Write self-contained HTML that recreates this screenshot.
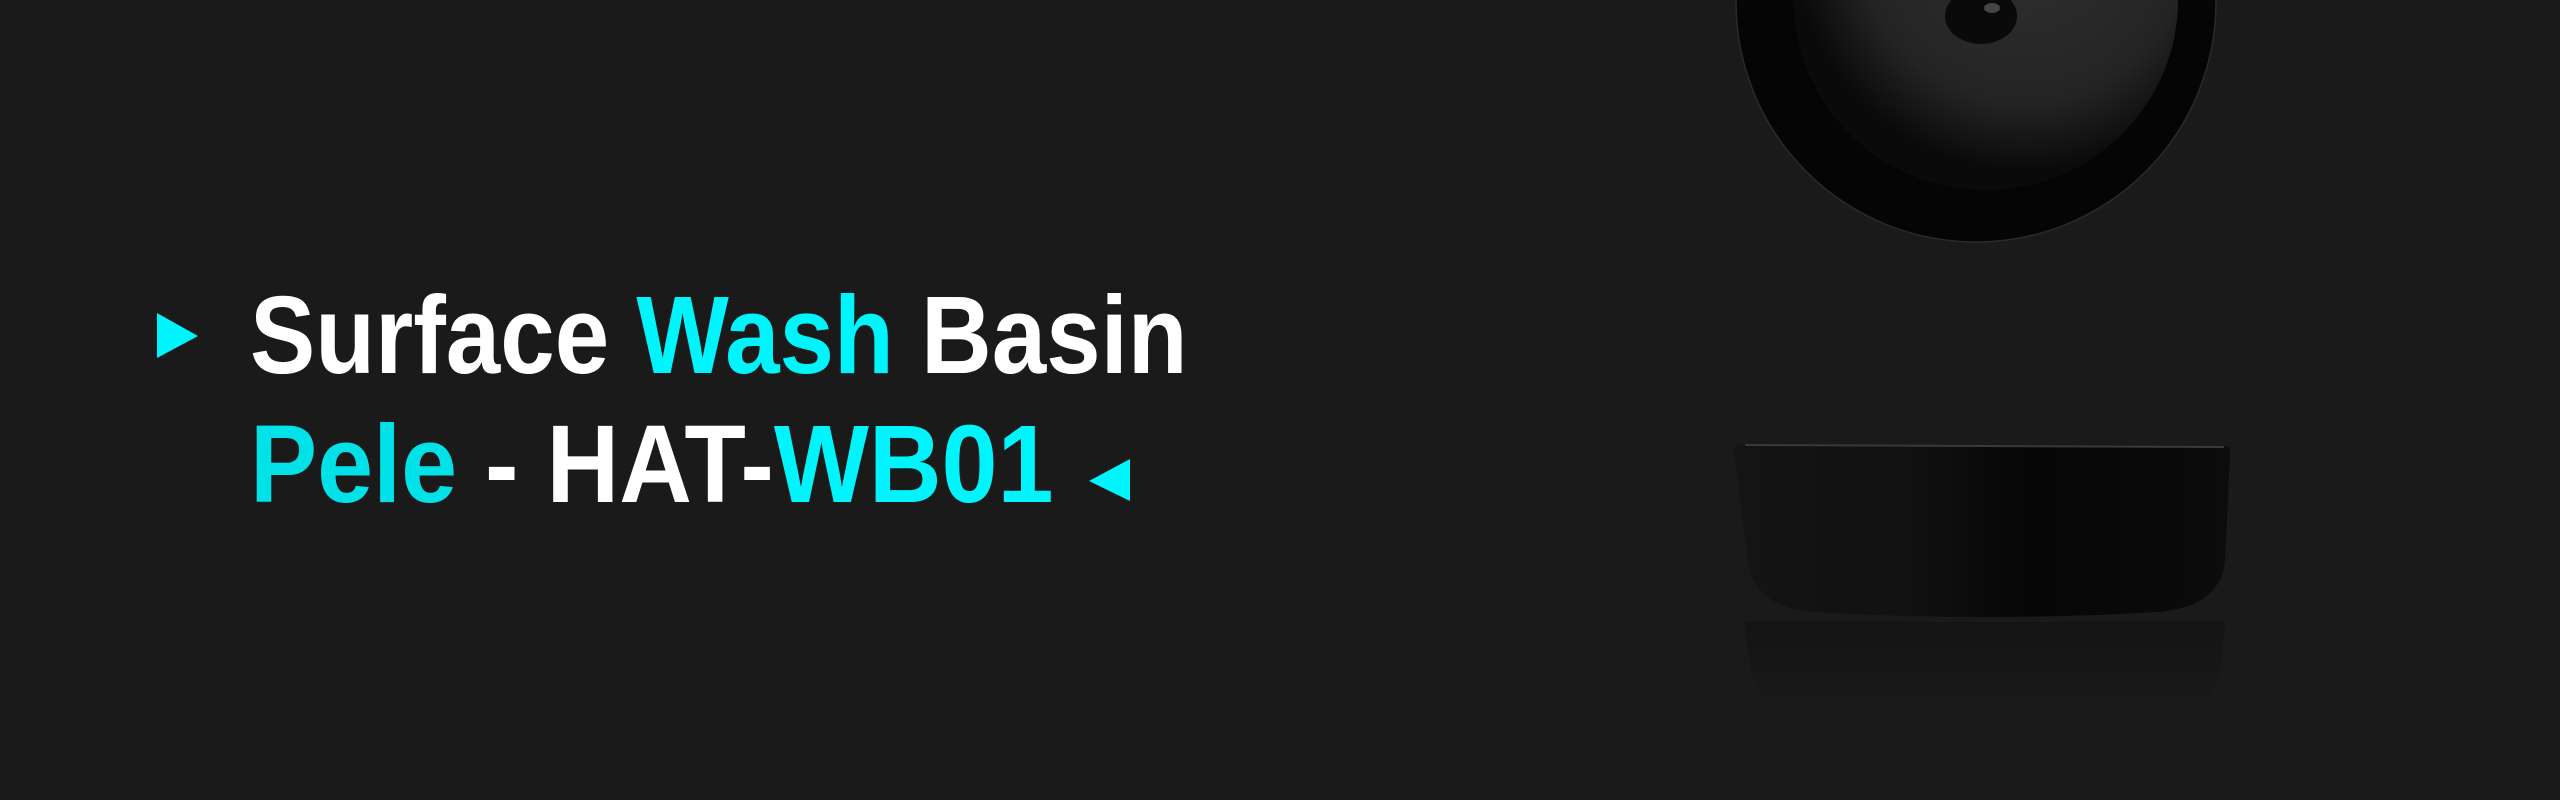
<!DOCTYPE html>
<html><head><meta charset="utf-8"><style>
html,body{margin:0;padding:0;background:#1a1a1a;}
body{width:2560px;height:800px;position:relative;overflow:hidden;font-family:"Liberation Sans",sans-serif;}
.line{position:absolute;left:250px;font-weight:bold;font-size:110px;line-height:1;white-space:nowrap;color:#fff;transform-origin:left top;}
.c{color:#00f4fc}
.c2{color:#00e2e8}
</style></head><body>
<svg width="2560" height="800" style="position:absolute;left:0;top:0">
<defs>
<radialGradient id="bowl" cx="0.6" cy="0.35" r="0.6">
<stop offset="0" stop-color="#303030"/><stop offset="0.7" stop-color="#242424"/><stop offset="1" stop-color="#0a0a0a"/>
</radialGradient>
<linearGradient id="side" x1="0" y1="0" x2="1" y2="0">
<stop offset="0" stop-color="#141414"/><stop offset="0.35" stop-color="#111"/><stop offset="0.6" stop-color="#060606"/><stop offset="1" stop-color="#0c0c0c"/>
</linearGradient>
<linearGradient id="refl" x1="0" y1="0" x2="0" y2="1">
<stop offset="0" stop-color="#141414"/><stop offset="1" stop-color="#1a1a1a"/>
</linearGradient>
</defs>
<circle cx="1976" cy="2" r="240" fill="#050505" stroke="#2a2a2a" stroke-width="1.5"/>
<ellipse cx="1986" cy="0" rx="192" ry="190" fill="url(#bowl)"/>
<ellipse cx="1981" cy="16" rx="36" ry="28" fill="#0a0a0a"/>
<ellipse cx="1992" cy="8" rx="8" ry="5" fill="#444"/>
<path d="M1745 622 Q1750 715 1790 720 L2180 720 Q2220 715 2225 622 Z" fill="url(#refl)"/>
<path d="M1734 452 Q1734 444 1745 444 L2224 446 Q2231 446 2230 455 L2225 560 Q2222 605 2160 612 Q1985 622 1810 612 Q1752 605 1748 560 Z" fill="url(#side)"/>
<path d="M1745 445 L2224 447" stroke="#3a3a3a" stroke-width="2"/>
</svg>
<svg width="2560" height="800" style="position:absolute;left:0;top:0">
<polygon points="157,313 198,336 157,358" fill="#00f4fc"/>
<polygon points="1130,459 1089,481 1130,501" fill="#00f4fc"/>
</svg>
<div class="line" style="top:281px;transform:scaleX(0.89)">Surface <span class="c">Wash</span> Basin</div>
<div class="line" style="top:410px;transform:scaleX(0.915)"><span class="c2">Pele</span> - HAT-<span class="c">WB01</span></div>
</body></html>
